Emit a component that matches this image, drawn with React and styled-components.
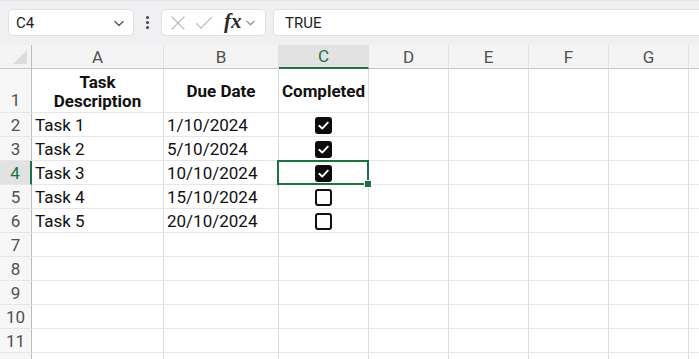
import React from 'react'
import styled, { createGlobalStyle, css } from 'styled-components'

const GlobalStyle = createGlobalStyle`
  html, body {
    margin: 0;
    padding: 0;
    background: #ffffff;
    font-family: Roboto, "Liberation Sans", Arial, sans-serif;
    overflow: hidden;
  }
`

const columns = [
  { key: 'A', width: 132 },
  { key: 'B', width: 115 },
  { key: 'C', width: 90 },
  { key: 'D', width: 80 },
  { key: 'E', width: 80 },
  { key: 'F', width: 80 },
  { key: 'G', width: 80 },
  { key: '', width: 80 },
]

const tasks = [
  { name: 'Task 1', due: '1/10/2024', done: true },
  { name: 'Task 2', due: '5/10/2024', done: true },
  { name: 'Task 3', due: '10/10/2024', done: true },
  { name: 'Task 4', due: '15/10/2024', done: false },
  { name: 'Task 5', due: '20/10/2024', done: false },
]

const ChevronDown = ({ size = 12, color = '#555' }) => (
  <svg width={size} height={size} viewBox="0 0 12 12" fill="none">
    <path d="M2 4.5 L6 8.5 L10 4.5" stroke={color} strokeWidth="1.3" strokeLinecap="round" strokeLinejoin="round" />
  </svg>
)

const CheckMark = () => (
  <svg width="17" height="17" viewBox="0 0 17 17" fill="none">
    <path d="M4.3 8.8 L7.2 11.6 L12.8 5.6" stroke="#fff" strokeWidth="1.9" strokeLinecap="round" strokeLinejoin="round" />
  </svg>
)

const App = () => {
  return (
    <>
      <GlobalStyle />
      <Page>
        <Toolbar>
          <NameBox>
            <span>C4</span>
            <ChevronDown />
          </NameBox>
          <Dots>
            <i />
            <i />
            <i />
          </Dots>
          <FormulaTools>
            <svg width="16" height="16" viewBox="0 0 16 16" fill="none">
              <path d="M2 2 L14 14 M14 2 L2 14" stroke="#bdbdbd" strokeWidth="1.2" strokeLinecap="round" />
            </svg>
            <svg width="18" height="16" viewBox="0 0 18 16" fill="none">
              <path d="M1.5 8.5 L6 13 L16.5 2.5" stroke="#bdbdbd" strokeWidth="1.2" strokeLinecap="round" strokeLinejoin="round" />
            </svg>
            <Fx>fx</Fx>
            <ChevronDown size={11} color="#8a8a8a" />
          </FormulaTools>
          <FormulaInput>TRUE</FormulaInput>
        </Toolbar>

        <Sheet>
          <Corner />
          {columns.map((c, i) => (
            <ColHeader key={i} $selected={c.key === 'C'}>
              {c.key}
            </ColHeader>
          ))}

          <RowHeader $align="end">1</RowHeader>
          <Cell $bold $center $wrap>Task Description</Cell>
          <Cell $bold $center>Due Date</Cell>
          <Cell $bold $center>Completed</Cell>
          {columns.slice(3).map((c, i) => (
            <Cell key={i} />
          ))}

          {tasks.map((t, i) => (
            <React.Fragment key={t.name}>
              <RowHeader $selected={i === 2}>{i + 2}</RowHeader>
              <Cell>{t.name}</Cell>
              <Cell>{t.due}</Cell>
              <Cell $center $active={i === 2}>
                <CheckBox $checked={t.done}>{t.done && <CheckMark />}</CheckBox>
                {i === 2 && <FillHandle />}
              </Cell>
              {columns.slice(3).map((c, j) => (
                <Cell key={j} />
              ))}
            </React.Fragment>
          ))}

          {[7, 8, 9, 10, 11, null].map((n, k) => (
            <React.Fragment key={k}>
              <RowHeader>{n}</RowHeader>
              {columns.map((c, j) => (
                <Cell key={j} />
              ))}
            </React.Fragment>
          ))}
        </Sheet>
      </Page>
    </>
  )
}

const Page = styled.div`
  width: 699px;
  height: 359px;
  overflow: hidden;
  background: #fff;
`

const Toolbar = styled.div`
  height: 45px;
  box-sizing: border-box;
  padding: 8px 0 9px 8px;
  display: flex;
  align-items: stretch;
  background: #f0eff1;
  border-top: 1px solid #e4e3e5;
`

const box = css`
  background: #fff;
  border: 1px solid #e0dfe2;
  border-radius: 5px;
  box-sizing: border-box;
`

const NameBox = styled.div`
  ${box};
  width: 126px;
  display: flex;
  align-items: center;
  justify-content: space-between;
  padding: 0 8px 0 7px;
  font-size: 15px;
  color: #222;
`

const Dots = styled.div`
  width: 27px;
  display: flex;
  flex-direction: column;
  align-items: center;
  justify-content: center;
  gap: 2px;

  i {
    width: 3px;
    height: 3px;
    border-radius: 50%;
    background: #444;
  }
`

const FormulaTools = styled.div`
  ${box};
  width: 105px;
  display: flex;
  align-items: center;
  padding: 0 5px 0 8px;
  gap: 9px;

  svg:last-child {
    margin-left: -6px;
  }
`

const Fx = styled.span`
  font-family: "Liberation Serif", "DejaVu Serif", serif;
  font-style: italic;
  font-weight: 700;
  font-size: 21px;
  color: #2a2a2a;
  line-height: 1;
  margin-left: 2px;
  margin-top: -2px;
`

const FormulaInput = styled.div`
  ${box};
  flex: 1;
  margin-left: 7px;
  border-right: none;
  border-radius: 5px 0 0 5px;
  display: flex;
  align-items: center;
  padding-left: 11px;
  font-size: 15px;
  color: #222;
`

const Sheet = styled.div`
  display: grid;
  grid-template-columns: 32px ${columns.map((c) => `${c.width}px`).join(' ')};
  grid-template-rows: 24px 44px repeat(11, 24px);
`

const Corner = styled.div`
  background: #f4f4f4;
  border-right: 1px solid #bdbdbd;
  border-bottom: 1px solid #c9c9c9;
  box-sizing: border-box;
  position: relative;

  &::after {
    content: '';
    position: absolute;
    right: 4px;
    bottom: 4px;
    border-left: 14px solid transparent;
    border-bottom: 14px solid #dcdcdc;
  }
`

const ColHeader = styled.div`
  box-sizing: border-box;
  background: ${(p) => (p.$selected ? '#e2e2e2' : '#f4f4f4')};
  border-right: 1px solid #e2e2e2;
  border-bottom: ${(p) => (p.$selected ? '2px solid #1e7145' : '1px solid #c9c9c9')};
  display: flex;
  align-items: center;
  justify-content: center;
  font-size: 17px;
  color: ${(p) => (p.$selected ? '#1e7145' : '#505050')};
`

const RowHeader = styled.div`
  box-sizing: border-box;
  background: ${(p) => (p.$selected ? '#e2e2e2' : '#f7f7f7')};
  border-right: ${(p) => (p.$selected ? '2px solid #1e7145' : '1px solid #bdbdbd')};
  border-bottom: 1px solid #e6e6e6;
  display: flex;
  align-items: ${(p) => (p.$align === 'end' ? 'flex-end' : 'center')};
  justify-content: center;
  padding-bottom: ${(p) => (p.$align === 'end' ? '2px' : '0')};
  font-size: 17px;
  color: ${(p) => (p.$selected ? '#1e7145' : '#505050')};
`

const Cell = styled.div`
  box-sizing: border-box;
  position: relative;
  border-right: 1px solid #dcdcdc;
  border-bottom: 1px solid #e6e6e6;
  display: flex;
  align-items: center;
  justify-content: ${(p) => (p.$center ? 'center' : 'flex-start')};
  text-align: ${(p) => (p.$center ? 'center' : 'left')};
  padding: 1px 3px 0;
  font-size: 17px;
  line-height: 19px;
  font-weight: ${(p) => (p.$bold ? 700 : 400)};
  color: #111;
  white-space: nowrap;
  ${(p) => p.$wrap && css`
    white-space: normal;
    padding: 3px 10px 0;
  `}

  ${(p) => p.$active && css`
    &::before {
      content: '';
      position: absolute;
      left: -2px;
      top: -1px;
      right: -1px;
      bottom: -1px;
      border: 2px solid #1e7145;
      pointer-events: none;
    }
  `}
`

const CheckBox = styled.span`
  width: 17px;
  height: 17px;
  box-sizing: border-box;
  border-radius: 3px;
  display: inline-flex;
  align-items: center;
  justify-content: center;
  background: ${(p) => (p.$checked ? '#0d0d0d' : '#fff')};
  border: ${(p) => (p.$checked ? 'none' : '2px solid #111')};
`

const FillHandle = styled.span`
  position: absolute;
  right: -4px;
  bottom: -4px;
  width: 6px;
  height: 6px;
  background: #1e7145;
  border: 1px solid #fff;
  z-index: 2;
`

export default App
